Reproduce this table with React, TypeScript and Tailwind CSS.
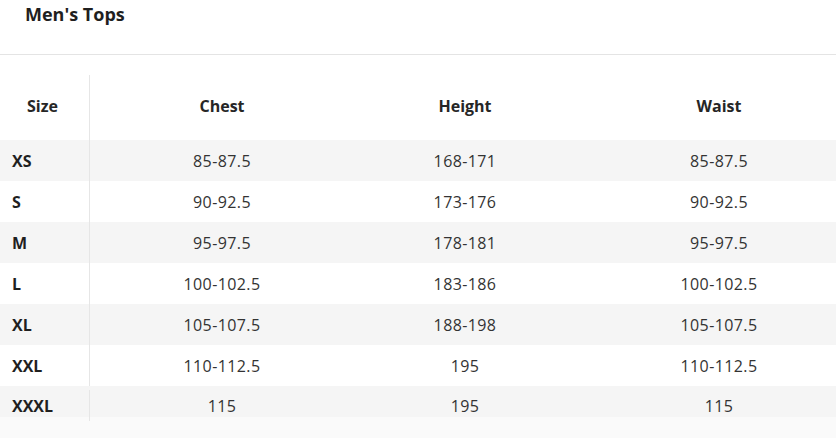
import React from 'react';

interface SizeRow {
  size: string;
  chest: string;
  height: string;
  waist: string;
}

const rows: SizeRow[] = [
  { size: 'XS', chest: '85-87.5', height: '168-171', waist: '85-87.5' },
  { size: 'S', chest: '90-92.5', height: '173-176', waist: '90-92.5' },
  { size: 'M', chest: '95-97.5', height: '178-181', waist: '95-97.5' },
  { size: 'L', chest: '100-102.5', height: '183-186', waist: '100-102.5' },
  { size: 'XL', chest: '105-107.5', height: '188-198', waist: '105-107.5' },
  { size: 'XXL', chest: '110-112.5', height: '195', waist: '110-112.5' },
  { size: 'XXXL', chest: '115', height: '195', waist: '115' },
];

const cols = 'grid grid-cols-[89px_1px_264px_222px_286px]';

export default function App() {
  return (
    <div className="h-[438px] w-[836px] overflow-hidden bg-white font-['Open_Sans',sans-serif] text-[#262626]">
      {/* Titel */}
      <div className="h-[55px] border-b border-[#e4e4e4] pl-[25px] pt-[2px]">
        <h1 className="text-[18px] font-bold leading-[25px] text-[#1f1f1f]">Men's Tops</h1>
      </div>

      <div className="pt-[20px]">
        <div className={`${cols} h-[65px] items-center text-[16px] font-bold`}>
          <div className="pb-[4px] pl-[27px]">Size</div>
          <div className="h-full bg-[#e6e6e6]" />
          <div className="pb-[4px] text-center">Chest</div>
          <div className="pb-[4px] text-center">Height</div>
          <div className="pb-[4px] text-center">Waist</div>
        </div>

        {rows.map((r, i) => {
          const last = i === rows.length - 1;
          return (
            <div
              key={r.size}
              className={`${cols} items-center text-[16px] ${i % 2 === 0 ? 'bg-[#f5f5f5]' : 'bg-white'} ${last ? 'h-[31px] pt-[4px]' : 'h-[41px] pb-[2px]'}`}
            >
              <div className="pl-[12px] font-bold text-[#1f1f1f]">{r.size}</div>
              <div className={`bg-[#e6e6e6] ${last ? 'h-[31px] self-end' : 'h-[41px]'}`} />
              <div className="text-center tracking-[0.4px] text-[#333]">{r.chest}</div>
              <div className="text-center tracking-[0.4px] text-[#333]">{r.height}</div>
              <div className="text-center tracking-[0.4px] text-[#333]">{r.waist}</div>
            </div>
          );
        })}

        <div className="h-[30px] bg-[#fafafa]" />
      </div>
    </div>
  );
}
